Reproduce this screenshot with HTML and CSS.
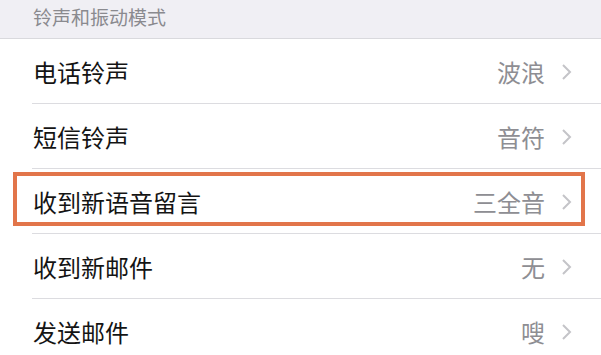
FILE: index.html
```html
<!DOCTYPE html>
<html lang="zh">
<head>
<meta charset="utf-8">
<link rel="stylesheet" href="styles.css">
</head>
<body>
<div class="page">
  <div class="section-header">铃声和振动模式</div>
  <div class="list">
    <div class="row">
      <span class="title">电话铃声</span>
      <span class="value">波浪</span>
      <svg class="chev" viewBox="0 0 11 18" width="11" height="18"><polyline points="2,2 9,9 2,16" fill="none" stroke="#c4c4c8" stroke-width="2"/></svg>
    </div>
    <div class="row">
      <span class="title">短信铃声</span>
      <span class="value">音符</span>
      <svg class="chev" viewBox="0 0 11 18" width="11" height="18"><polyline points="2,2 9,9 2,16" fill="none" stroke="#c4c4c8" stroke-width="2"/></svg>
    </div>
    <div class="row highlighted">
      <span class="title">收到新语音留言</span>
      <span class="value">三全音</span>
      <svg class="chev" viewBox="0 0 11 18" width="11" height="18"><polyline points="2,2 9,9 2,16" fill="none" stroke="#c4c4c8" stroke-width="2"/></svg>
      <div class="highlight-box"></div>
    </div>
    <div class="row">
      <span class="title">收到新邮件</span>
      <span class="value">无</span>
      <svg class="chev" viewBox="0 0 11 18" width="11" height="18"><polyline points="2,2 9,9 2,16" fill="none" stroke="#c4c4c8" stroke-width="2"/></svg>
    </div>
    <div class="row last">
      <span class="title">发送邮件</span>
      <span class="value">嗖</span>
      <svg class="chev" viewBox="0 0 11 18" width="11" height="18"><polyline points="2,2 9,9 2,16" fill="none" stroke="#c4c4c8" stroke-width="2"/></svg>
    </div>
  </div>
</div>
</body>
</html>
```
FILE: styles.css
```css
html, body {
  margin: 0;
  padding: 0;
  background: #ffffff;
}
.page {
  width: 601px;
  height: 355px;
  overflow: hidden;
  font-family: "Noto Sans CJK SC", "Noto Sans", sans-serif;
}
.section-header {
  height: 39px;
  box-sizing: border-box;
  background: #f0eff4;
  border-bottom: 1px solid #d9d9dd;
  padding-left: 33px;
  font-size: 19px;
  line-height: 34px;
  color: #8a8a8f;
}
.list {
  background: #fff;
}
.row {
  position: relative;
  height: 65px;
  box-sizing: border-box;
  display: flex;
  align-items: center;
  padding: 0 29px 0 33px;
}
.row::after {
  content: "";
  position: absolute;
  left: 32px;
  right: 0;
  bottom: 0;
  height: 1px;
  background: #dcdce0;
}
.row.last::after {
  display: none;
}
.title {
  flex: 1;
  font-size: 24px;
  color: #141414;
}
.value {
  font-size: 24px;
  color: #8e8e93;
  margin-right: 16px;
}
.chev {
  display: block;
}
.highlight-box {
  position: absolute;
  left: 13px;
  top: 3px;
  width: 572px;
  height: 54px;
  box-sizing: border-box;
  border: 4px solid #e2754a;
}
```
